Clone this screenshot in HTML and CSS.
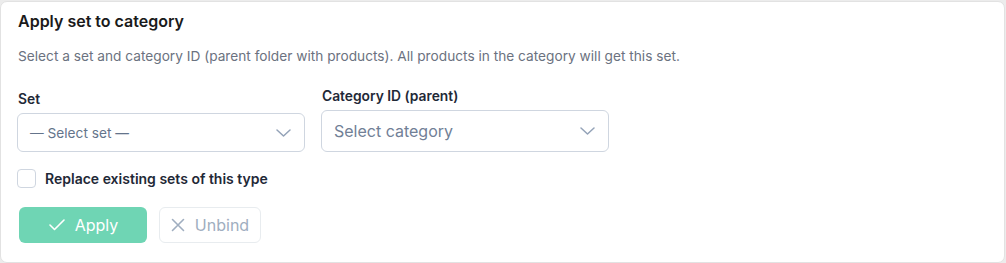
FILE: index.html
```html
<!DOCTYPE html>
<html>
<head>
<meta charset="utf-8">
<link rel="stylesheet" href="styles.css">
</head>
<body>
<div class="card">
  <h2 class="title">Apply set to category</h2>
  <p class="desc">Select a set and category ID (parent folder with products). All products in the category will get this set.</p>
  <div class="fields">
    <div class="field">
      <label class="label">Set</label>
      <div class="select select-sm">
        <span>— Select set —</span>
        <svg class="chev" width="15" height="8" viewBox="0 0 15 8"><polyline points="1,1 7.5,7 14,1" fill="none" stroke="#94a3b8" stroke-width="1.5" stroke-linecap="round" stroke-linejoin="round"/></svg>
      </div>
    </div>
    <div class="field">
      <label class="label">Category ID (parent)</label>
      <div class="select select-lg">
        <span>Select category</span>
        <svg class="chev" width="15" height="8" viewBox="0 0 15 8"><polyline points="1,1 7.5,7 14,1" fill="none" stroke="#94a3b8" stroke-width="1.5" stroke-linecap="round" stroke-linejoin="round"/></svg>
      </div>
    </div>
  </div>
  <div class="check-row">
    <span class="box"></span>
    <span class="check-label">Replace existing sets of this type</span>
  </div>
  <div class="actions">
    <button class="btn btn-apply">
      <svg width="16" height="12" viewBox="0 0 16 12"><polyline points="1,6 5.5,10.5 15,1" fill="none" stroke="#fff" stroke-width="1.6" stroke-linecap="round" stroke-linejoin="round"/></svg>
      <span>Apply</span>
    </button>
    <button class="btn btn-unbind">
      <svg width="14" height="14" viewBox="0 0 14 14"><path d="M1.5 1.5 L12.5 12.5 M12.5 1.5 L1.5 12.5" fill="none" stroke="#a0aec0" stroke-width="1.6" stroke-linecap="round"/></svg>
      <span>Unbind</span>
    </button>
  </div>
</div>
</body>
</html>
```

FILE: styles.css
```css
* { box-sizing: border-box; }
html, body { margin: 0; padding: 0; }
body {
  background: #ececec;
  font-family: Inter, "Liberation Sans", sans-serif;
  padding: 1px 1px 0 0;
  width: 1006px;
  height: 263px;
}
.card {
  background: #fff;
  border: 1px solid #e2e2e2;
  border-radius: 7px;
  width: 1005px;
  height: 262px;
  padding: 8px 16px 18px 16px;
  display: flex;
  flex-direction: column;
}
.title {
  margin: 0 0 0 1px;
  font-size: 16px;
  font-weight: 600;
  line-height: 22px;
  color: #1a1a1a;
}
.desc {
  margin: 14px 0 0 1px;
  font-size: 13.7px;
  line-height: 20px;
  color: #6b7280;
}
.fields {
  margin-top: 21px;
  display: flex;
  gap: 16px;
  align-items: flex-end;
}
.field {
  display: flex;
  flex-direction: column;
  gap: 5px;
  width: 288px;
}
.label {
  font-size: 13.8px;
  font-weight: 600;
  line-height: 18px;
  color: #1f2937;
  padding-left: 1px;
}
.select {
  border: 1px solid #cfd6e0;
  border-radius: 6px;
  display: flex;
  align-items: center;
  justify-content: space-between;
  padding: 0 13px 0 12px;
  color: #64748b;
}
.select-sm { height: 39px; font-size: 13.7px; }
.select-lg { height: 42px; font-size: 16px; color: #718096; }
.check-row {
  margin-top: 17px;
  display: flex;
  align-items: center;
  gap: 9px;
}
.box {
  width: 19px;
  height: 19px;
  border: 1px solid #cfd6e0;
  border-radius: 4px;
  background: #fff;
}
.check-label {
  font-size: 14px;
  font-weight: 600;
  color: #1f2937;
}
.actions {
  margin-top: 19px;
  display: flex;
  gap: 12px;
  padding-left: 2px;
}
.btn {
  height: 36px;
  border-radius: 6px;
  font-family: inherit;
  font-size: 16px;
  display: flex;
  align-items: center;
  gap: 10px;
  padding: 0;
  cursor: pointer;
}
.btn-apply {
  width: 128px;
  background: #6fd5b4;
  border: none;
  color: #fff;
  justify-content: center;
  padding-left: 1px;
}
.btn-unbind {
  width: 102px;
  background: #fff;
  border: 1px solid #e8ecef;
  color: #a0aec0;
  justify-content: center;
}
```
